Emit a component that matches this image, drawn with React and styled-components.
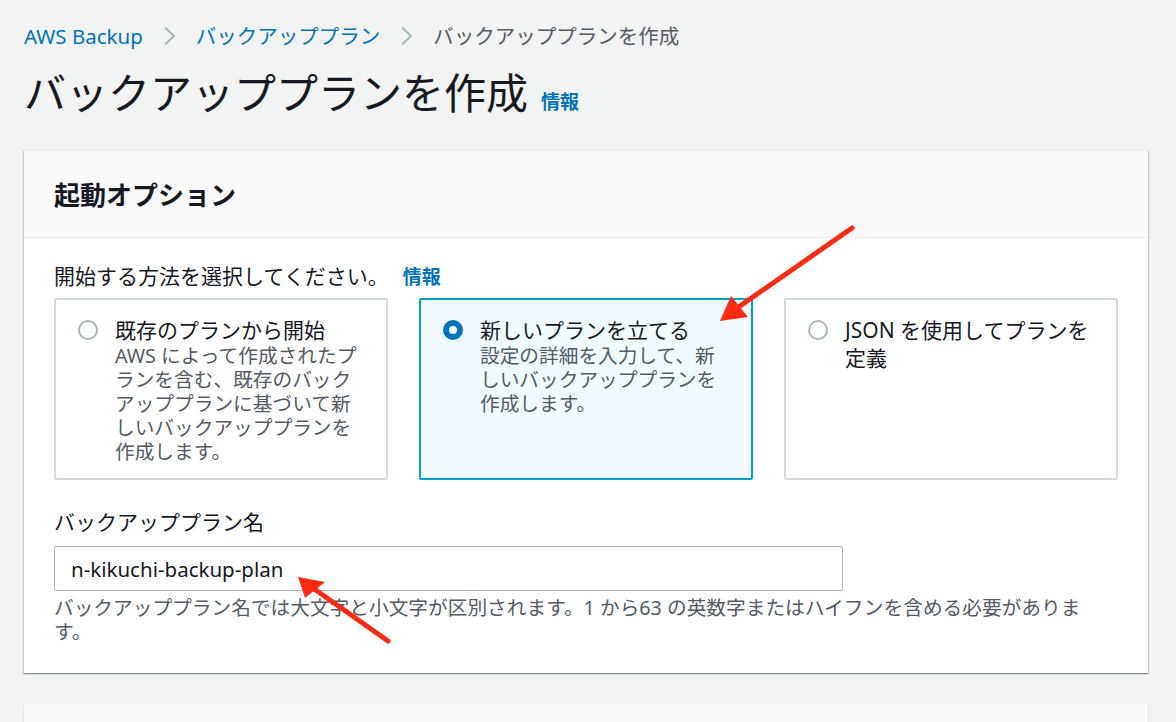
import React from "react";
import styled, { createGlobalStyle } from "styled-components";

const GlobalStyle = createGlobalStyle`
  html, body {
    margin: 0;
    padding: 0;
    background: #f2f3f3;
    font-family: "Noto Sans", "Noto Sans CJK JP", sans-serif;
    color: #16191f;
  }
`;

const tiles = [
  {
    id: "existing",
    title: "既存のプランから開始",
    desc: "AWS によって作成されたプランを含む、既存のバックアッププランに基づいて新しいバックアッププランを作成します。",
  },
  {
    id: "new",
    title: "新しいプランを立てる",
    desc: "設定の詳細を入力して、新しいバックアッププランを作成します。",
  },
  {
    id: "json",
    title: "JSON を使用してプランを定義",
    desc: "",
  },
];

export default function App() {
  const selected = "new";

  return (
    <Page>
      <GlobalStyle />
      <Breadcrumbs>
        <Crumb href="#">AWS Backup</Crumb>
        <Chevron />
        <Crumb href="#">バックアッププラン</Crumb>
        <Chevron />
        <Current>バックアッププランを作成</Current>
      </Breadcrumbs>

      <TitleRow>
        <Title>バックアッププランを作成</Title>
        <InfoLink href="#">情報</InfoLink>
      </TitleRow>

      <Card>
        <CardHeader>起動オプション</CardHeader>
        <CardBody>
          <Question>
            開始する方法を選択してください。
            <InfoLink href="#" $inline>情報</InfoLink>
          </Question>

          <Tiles>
            {tiles.map((t) => (
              <Tile key={t.id} $active={t.id === selected}>
                <Radio $active={t.id === selected} />
                <TileText>
                  <TileTitle>{t.title}</TileTitle>
                  {t.desc && <TileDesc>{t.desc}</TileDesc>}
                </TileText>
              </Tile>
            ))}
          </Tiles>

          <FieldLabel>バックアッププラン名</FieldLabel>
          <Input defaultValue="n-kikuchi-backup-plan" />
          <Hint>
            バックアッププラン名では大文字と小文字が区別されます。1 から63 の英数字またはハイフンを含める必要があります。
          </Hint>
        </CardBody>
      </Card>

      <NextCard />

      <Annotations viewBox="0 0 1176 722">
        <Arrow x1={852} y1={228} x2={730} y2={313} />
        <polygon points="720,321 731,296 748,317" fill="#ff2a12" />
        <Arrow x1={388} y1={641} x2={310} y2={586} />
        <polygon points="298,577 305,598 325,582" fill="#ff2a12" />
      </Annotations>
    </Page>
  );
}

function Chevron() {
  return (
    <ChevronIcon viewBox="0 0 13 20">
      <polyline points="2,1.5 11,10 2,18.5" />
    </ChevronIcon>
  );
}

const Page = styled.div`
  position: relative;
  width: 1176px;
  height: 722px;
  overflow: hidden;
  padding: 0 28px 0 24px;
  box-sizing: border-box;
`;

const Breadcrumbs = styled.nav`
  display: flex;
  align-items: center;
  gap: 20px;
  padding-top: 21px;
  height: 30px;
  font-size: 20.5px;
  line-height: 30px;
`;

const Crumb = styled.a`
  color: #0073bb;
  text-decoration: none;
`;

const Current = styled.span`
  color: #545b64;
`;

const ChevronIcon = styled.svg`
  width: 13px;
  height: 20px;
  fill: none;
  stroke: #aab7b8;
  stroke-width: 2;
`;

const TitleRow = styled.div`
  display: flex;
  align-items: baseline;
  gap: 13px;
  margin-top: 14px;
  height: 56px;
`;

const Title = styled.h1`
  margin: 0;
  font-size: 42px;
  font-weight: 400;
  line-height: 56px;
  color: #16191f;
`;

const InfoLink = styled.a`
  color: #0073bb;
  font-weight: 700;
  font-size: 19px;
  text-decoration: none;
  margin-left: ${(p) => (p.$inline ? "14px" : "0")};
`;

const Card = styled.section`
  margin-top: 29px;
  background: #fff;
  border-top: 1px solid #eaeded;
  box-shadow: 0 1px 1px 0 rgba(0, 28, 36, 0.3), 1px 1px 1px 0 rgba(0, 28, 36, 0.15),
    -1px 1px 1px 0 rgba(0, 28, 36, 0.15);
`;

const CardHeader = styled.h2`
  margin: 0;
  height: 86px;
  display: flex;
  align-items: center;
  padding: 0 30px;
  background: #fafafa;
  border-bottom: 1px solid #eaeded;
  font-size: 26px;
  font-weight: 700;
`;

const CardBody = styled.div`
  padding: 24px 30px 29px;
`;

const Question = styled.div`
  font-size: 21px;
  line-height: 28px;
  height: 28px;
`;

const Tiles = styled.div`
  display: grid;
  grid-template-columns: repeat(3, 1fr);
  gap: 31px;
  margin-top: 8px;
`;

const Tile = styled.label`
  display: flex;
  gap: 17px;
  box-sizing: border-box;
  height: 182px;
  padding: 16px 20px 15px 22px;
  border: 2px solid ${(p) => (p.$active ? "#00a1c9" : "#d5dbdb")};
  border-radius: 2px;
  background: ${(p) => (p.$active ? "#f1faff" : "#fff")};
`;

const Radio = styled.span`
  flex: none;
  width: 20px;
  height: 20px;
  margin-top: 4px;
  box-sizing: border-box;
  border-radius: 50%;
  border: ${(p) => (p.$active ? "6px solid #0073bb" : "2px solid #aab7b8")};
  background: #fff;
`;

const TileText = styled.div`
  display: flex;
  flex-direction: column;
  min-width: 0;
`;

const TileTitle = styled.div`
  font-size: 21px;
  line-height: 28px;
  color: #16191f;
`;

const TileDesc = styled.div`
  font-size: 19.7px;
  line-height: 24px;
  color: #545b64;
`;

const FieldLabel = styled.div`
  margin-top: 29px;
  font-size: 21px;
  line-height: 26px;
`;

const Input = styled.input`
  display: block;
  margin-top: 11px;
  width: 789px;
  height: 45px;
  box-sizing: border-box;
  padding: 0 16px;
  border: 1px solid #aab7b8;
  border-radius: 2px;
  font-family: inherit;
  font-size: 20.5px;
  color: #16191f;
  background: #fff;
  outline: none;
`;

const Hint = styled.div`
  margin-top: 5px;
  max-width: 1050px;
  font-size: 19.7px;
  line-height: 24px;
  color: #545b64;
`;

const NextCard = styled.div`
  margin-top: 31px;
  height: 60px;
  background: #fafafa;
  box-shadow: 0 1px 1px 0 rgba(0, 28, 36, 0.3);
`;

const Annotations = styled.svg`
  position: absolute;
  inset: 0;
  width: 1176px;
  height: 722px;
  pointer-events: none;
`;

const Arrow = styled.line`
  stroke: #ff2a12;
  stroke-width: 5;
  stroke-linecap: round;
`;
